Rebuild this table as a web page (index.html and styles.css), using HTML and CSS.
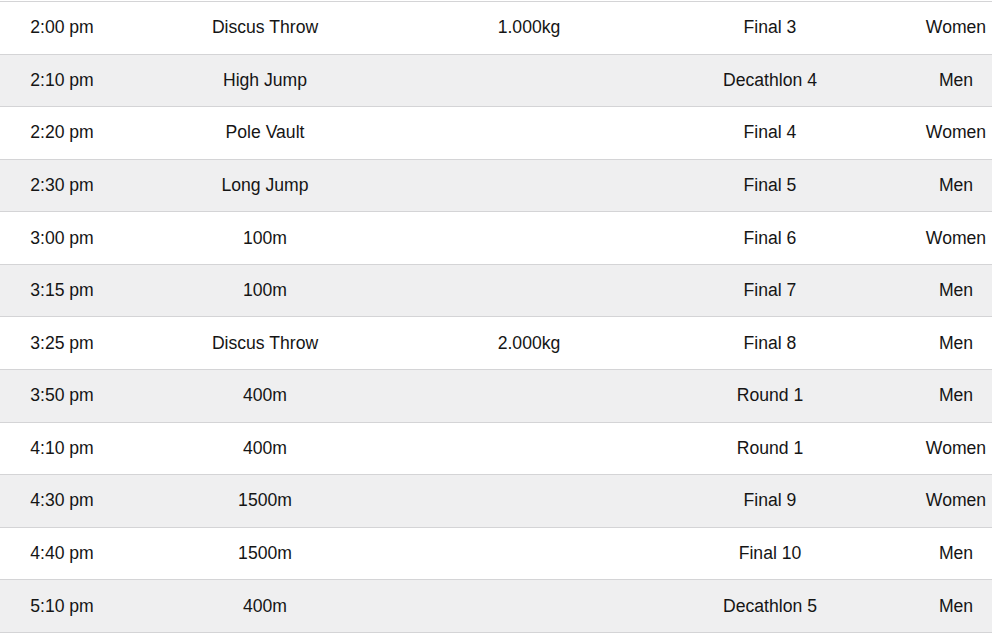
FILE: index.html
```html
<!DOCTYPE html>
<html>
<head>
<meta charset="utf-8">
<link rel="stylesheet" href="styles.css">
</head>
<body>
<div class="schedule">
  <div class="row"><div>2:00 pm</div><div>Discus Throw</div><div>1.000kg</div><div>Final 3</div><div>Women</div></div>
  <div class="row alt"><div>2:10 pm</div><div>High Jump</div><div></div><div>Decathlon 4</div><div>Men</div></div>
  <div class="row"><div>2:20 pm</div><div>Pole Vault</div><div></div><div>Final 4</div><div>Women</div></div>
  <div class="row alt"><div>2:30 pm</div><div>Long Jump</div><div></div><div>Final 5</div><div>Men</div></div>
  <div class="row"><div>3:00 pm</div><div>100m</div><div></div><div>Final 6</div><div>Women</div></div>
  <div class="row alt"><div>3:15 pm</div><div>100m</div><div></div><div>Final 7</div><div>Men</div></div>
  <div class="row"><div>3:25 pm</div><div>Discus Throw</div><div>2.000kg</div><div>Final 8</div><div>Men</div></div>
  <div class="row alt"><div>3:50 pm</div><div>400m</div><div></div><div>Round 1</div><div>Men</div></div>
  <div class="row"><div>4:10 pm</div><div>400m</div><div></div><div>Round 1</div><div>Women</div></div>
  <div class="row alt"><div>4:30 pm</div><div>1500m</div><div></div><div>Final 9</div><div>Women</div></div>
  <div class="row"><div>4:40 pm</div><div>1500m</div><div></div><div>Final 10</div><div>Men</div></div>
  <div class="row alt"><div>5:10 pm</div><div>400m</div><div></div><div>Decathlon 5</div><div>Men</div></div>
</div>
</body>
</html>
```

FILE: styles.css
```css
html, body {
  margin: 0;
  padding: 0;
  background: #ffffff;
  overflow: hidden;
}
.schedule {
  width: 1024px;
  margin-top: 1px;
  border-top: 1px solid #d4d4d6;
  font-family: "Liberation Sans", Arial, sans-serif;
  font-size: 17.6px;
  color: #151515;
}
.row {
  display: grid;
  grid-template-columns: 124px 282px 246px 236px 136px;
  height: 51.58px;
  border-bottom: 1px solid #d4d4d6;
  align-items: center;
  text-align: center;
  background: #ffffff;
}
.row.alt {
  background: #efeff0;
}
```
